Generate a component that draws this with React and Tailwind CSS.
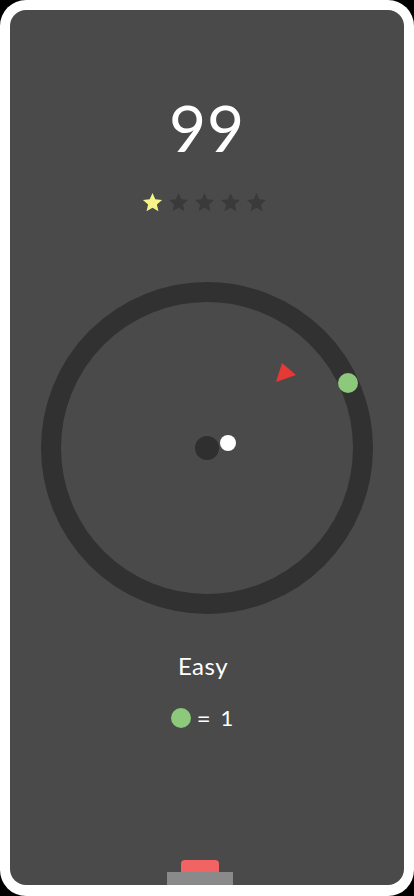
import React from 'react';

const Star = ({ lit }) => (
  <svg viewBox="0 0 24 24" className="w-[23px] h-[23px]">
    <path
      d="M12 2.2l2.9 6.5 7.1.7-5.4 4.7 1.6 7-6.2-3.7-6.2 3.7 1.6-7L2 9.4l7.1-.7z"
      fill={lit ? '#f7f48a' : '#3a3a3a'}
    />
  </svg>
);

const App = () => {
  const stars = [true, false, false, false, false];

  return (
    <div className="w-[414px] h-[896px] bg-black" style={{ fontFamily: 'Lato, "Noto Sans", sans-serif' }}>
      <div className="w-full h-full bg-white rounded-[26px] pt-[10px] px-[10px] pb-[11px]">
        <div className="w-full h-full bg-[#4a4a4a] rounded-[16px] flex flex-col items-center">
          {/* Score */}
          <div className="mt-[86px] text-white text-[64px] leading-none tracking-[1px]">99</div>

          {/* Stars */}
          <div className="mt-[31px] mr-[6px] flex gap-[3px]">
            {stars.map((lit, i) => (
              <Star key={i} lit={lit} />
            ))}
          </div>

          {/* Game board */}
          <div className="relative mt-[68px] w-[332px] h-[332px]">
            <svg viewBox="0 0 332 332" className="absolute inset-0 w-full h-full">
              <circle cx="166" cy="166" r="156" fill="none" stroke="#313131" strokeWidth="20" />
              <polygon points="241,81 235,100 255,93" fill="#e53935" />
            </svg>
            <div className="absolute left-[297px] top-[91px] w-[20px] h-[20px] rounded-full bg-[#8cc97b]" />
            <div className="absolute left-[154px] top-[154px] w-[24px] h-[24px] rounded-full bg-[#2f2f2f]" />
            <div className="absolute left-[179px] top-[153px] w-[16px] h-[16px] rounded-full bg-white" />
          </div>

          {/* Level */}
          <div className="mt-[40px] mr-[8px] text-white text-[24px] leading-none tracking-[0.5px]">Easy</div>
          <div className="mt-[28px] mr-[10px] flex items-center gap-[6px] text-white text-[22px] leading-none">
            <span className="w-[20px] h-[20px] rounded-full bg-[#8cc97b]" />
            <span className="text-[24px]">=</span>
            <span className="ml-[4px]">1</span>
          </div>

          {/* Bottom button */}
          <div className="mt-auto mr-[14px] flex flex-col items-center">
            <div className="w-[38px] h-[12px] rounded-t-[4px] bg-[#f26363]" />
            <div className="w-[66px] h-[13px] bg-[#8a8a8a]" />
          </div>
        </div>
      </div>
    </div>
  );
};

export default App;
